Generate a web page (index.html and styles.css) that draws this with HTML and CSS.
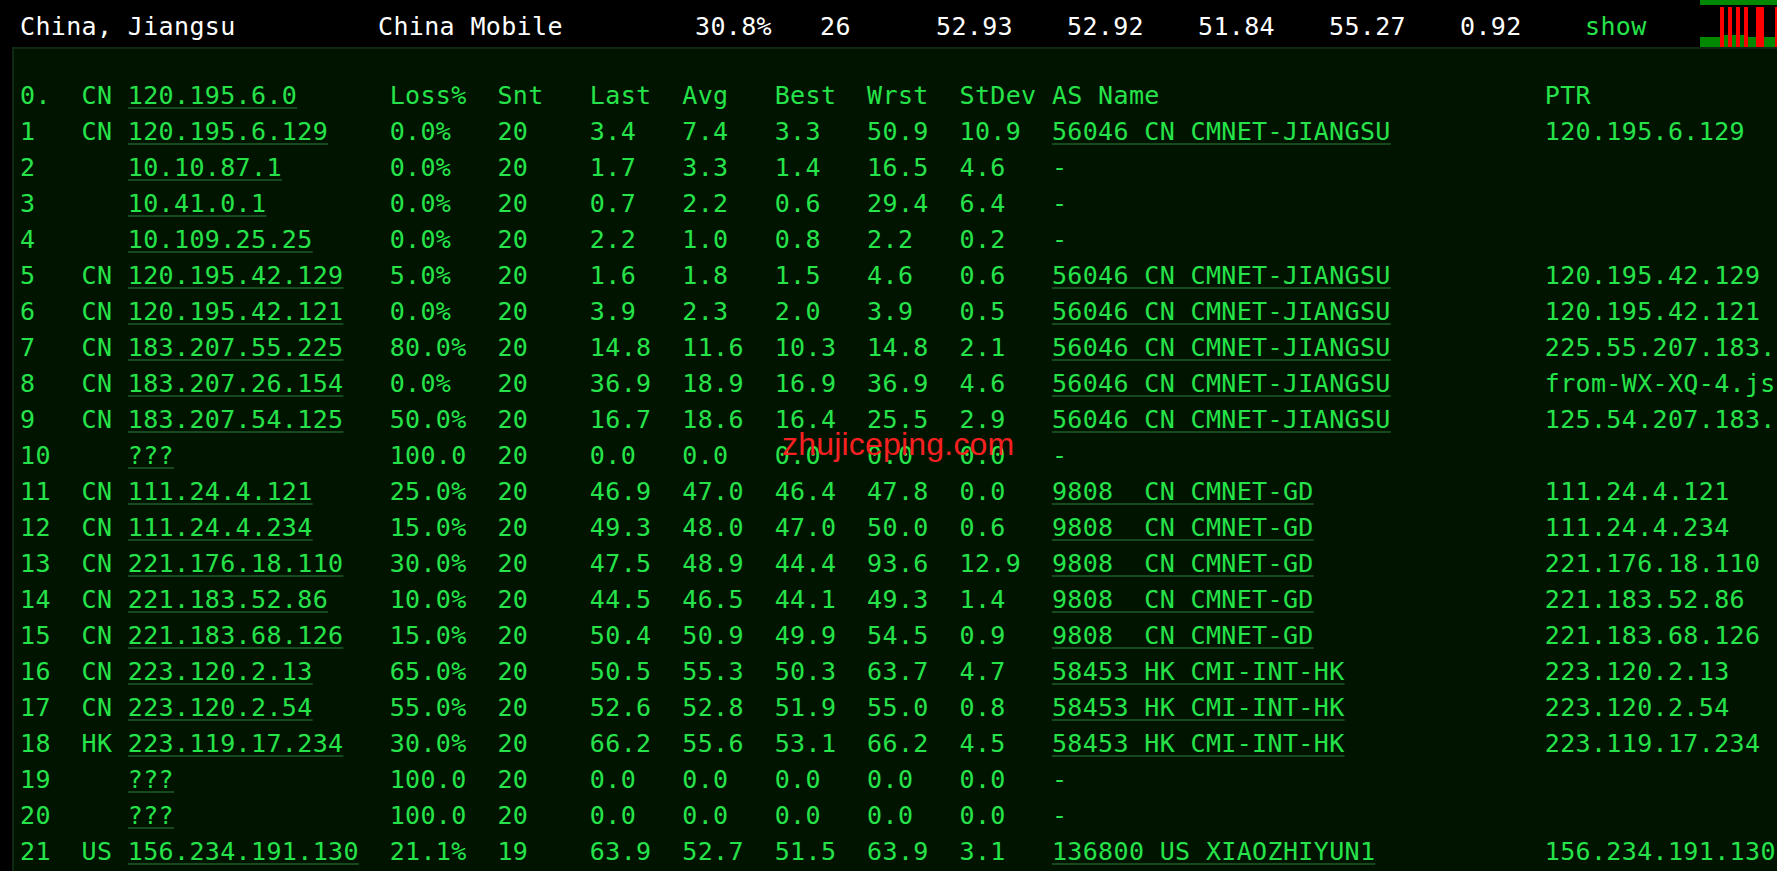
FILE: index.html
```html
<!DOCTYPE html>
<html lang="en">
<head>
<meta charset="utf-8">
<title>MTR</title>
<link rel="stylesheet" href="styles.css">
</head>
<body>
<div class="top">
  <span class="cell c1">China, Jiangsu</span>
  <span class="cell c2">China Mobile</span>
  <span class="cell c3">30.8%</span>
  <span class="cell c4">26</span>
  <span class="cell c5">52.93</span>
  <span class="cell c6">52.92</span>
  <span class="cell c7">51.84</span>
  <span class="cell c8">55.27</span>
  <span class="cell c9">0.92</span>
  <a class="cell c10 show">show</a>
  <div class="chart">
    <i class="g1"></i><i class="g2"></i><i class="g3"></i>
    <i class="r r1"></i><i class="r r2"></i><i class="r r3"></i><i class="r r4"></i><i class="r r5"></i><i class="r r6"></i>
  </div>
</div>
<div class="panel">
<pre>0.  CN <u>120.195.6.0</u>      Loss%  Snt   Last  Avg   Best  Wrst  StDev AS Name                         PTR
1   CN <u>120.195.6.129</u>    0.0%   20    3.4   7.4   3.3   50.9  10.9  <u>56046 CN CMNET-JIANGSU</u>          120.195.6.129
2      <u>10.10.87.1</u>       0.0%   20    1.7   3.3   1.4   16.5  4.6   -
3      <u>10.41.0.1</u>        0.0%   20    0.7   2.2   0.6   29.4  6.4   -
4      <u>10.109.25.25</u>     0.0%   20    2.2   1.0   0.8   2.2   0.2   -
5   CN <u>120.195.42.129</u>   5.0%   20    1.6   1.8   1.5   4.6   0.6   <u>56046 CN CMNET-JIANGSU</u>          120.195.42.129
6   CN <u>120.195.42.121</u>   0.0%   20    3.9   2.3   2.0   3.9   0.5   <u>56046 CN CMNET-JIANGSU</u>          120.195.42.121
7   CN <u>183.207.55.225</u>   80.0%  20    14.8  11.6  10.3  14.8  2.1   <u>56046 CN CMNET-JIANGSU</u>          225.55.207.183.static.js.chinamobile.com
8   CN <u>183.207.26.154</u>   0.0%   20    36.9  18.9  16.9  36.9  4.6   <u>56046 CN CMNET-JIANGSU</u>          from-WX-XQ-4.js.chinamobile.com
9   CN <u>183.207.54.125</u>   50.0%  20    16.7  18.6  16.4  25.5  2.9   <u>56046 CN CMNET-JIANGSU</u>          125.54.207.183.static.js.chinamobile.com
10     <u>???</u>              100.0  20    0.0   0.0   0.0   0.0   0.0   -
11  CN <u>111.24.4.121</u>     25.0%  20    46.9  47.0  46.4  47.8  0.0   <u>9808  CN CMNET-GD</u>               111.24.4.121
12  CN <u>111.24.4.234</u>     15.0%  20    49.3  48.0  47.0  50.0  0.6   <u>9808  CN CMNET-GD</u>               111.24.4.234
13  CN <u>221.176.18.110</u>   30.0%  20    47.5  48.9  44.4  93.6  12.9  <u>9808  CN CMNET-GD</u>               221.176.18.110
14  CN <u>221.183.52.86</u>    10.0%  20    44.5  46.5  44.1  49.3  1.4   <u>9808  CN CMNET-GD</u>               221.183.52.86
15  CN <u>221.183.68.126</u>   15.0%  20    50.4  50.9  49.9  54.5  0.9   <u>9808  CN CMNET-GD</u>               221.183.68.126
16  CN <u>223.120.2.13</u>     65.0%  20    50.5  55.3  50.3  63.7  4.7   <u>58453 HK CMI-INT-HK</u>             223.120.2.13
17  CN <u>223.120.2.54</u>     55.0%  20    52.6  52.8  51.9  55.0  0.8   <u>58453 HK CMI-INT-HK</u>             223.120.2.54
18  HK <u>223.119.17.234</u>   30.0%  20    66.2  55.6  53.1  66.2  4.5   <u>58453 HK CMI-INT-HK</u>             223.119.17.234
19     <u>???</u>              100.0  20    0.0   0.0   0.0   0.0   0.0   -
20     <u>???</u>              100.0  20    0.0   0.0   0.0   0.0   0.0   -
21  US <u>156.234.191.130</u>  21.1%  19    63.9  52.7  51.5  63.9  3.1   <u>136800 US XIAOZHIYUN1</u>           156.234.191.130
</pre>
<div class="mark">zhujiceping.com</div>
</div>
</body>
</html>
```
FILE: styles.css
```css
html, body {
  margin: 0;
  height: 100%;
  background: #000;
  overflow: hidden;
}
body {
  font-family: "DejaVu Sans Mono", monospace;
  font-size: 25px;
  letter-spacing: 0.35px;
  line-height: 36px;
  display: flex;
  flex-direction: column;
}
.top {
  position: relative;
  height: 47px;
  flex: none;
  color: #fff;
  display: grid;
  grid-template-columns: 358px 317px 125px 116px 131px 131px 131px 131px 125px 1fr;
  padding: 9px 0 0 20px;
  box-sizing: border-box;
}
.cell { white-space: nowrap; }
.show { color: #26e34a; }
.chart {
  position: absolute;
  right: 0;
  top: 0;
  width: 77px;
  height: 47px;
}
.chart i { position: absolute; display: block; }
.g1 { left: 0; top: 0; width: 77px; height: 5px; background: #008800; }
.g2 { left: 0; top: 37px; width: 77px; height: 10px; background: #008800; }
.g3 { left: 24px; top: 35px; width: 24px; height: 2px; background: #008800; }
.r { top: 7px; height: 40px; background: #ff0000; }
.r1 { left: 20px; width: 4px; }
.r2 { left: 28px; width: 4px; }
.r3 { left: 36px; width: 4px; }
.r4 { left: 44px; width: 4px; }
.r5 { left: 56px; width: 8px; }
.r6 { left: 75px; width: 2px; }
.panel {
  position: relative;
  flex: 1;
  min-height: 0;
  margin-left: 12px;
  background: #001400;
  border-top: 2px solid #102a12;
  border-left: 2px solid #102a12;
  overflow: hidden;
}
pre {
  margin: 0;
  padding: 29px 0 0 6px;
  font: inherit;
  color: #26e34a;
  white-space: pre;
}
u {
  text-decoration: underline;
  text-decoration-color: #17491f;
  text-decoration-thickness: 2px;
  text-underline-offset: 3px;
}
.mark {
  position: absolute;
  left: 768px;
  top: 377px;
  font-family: "Liberation Sans", sans-serif;
  font-size: 32px;
  letter-spacing: 0.2px;
  color: #f82020;
}
```
